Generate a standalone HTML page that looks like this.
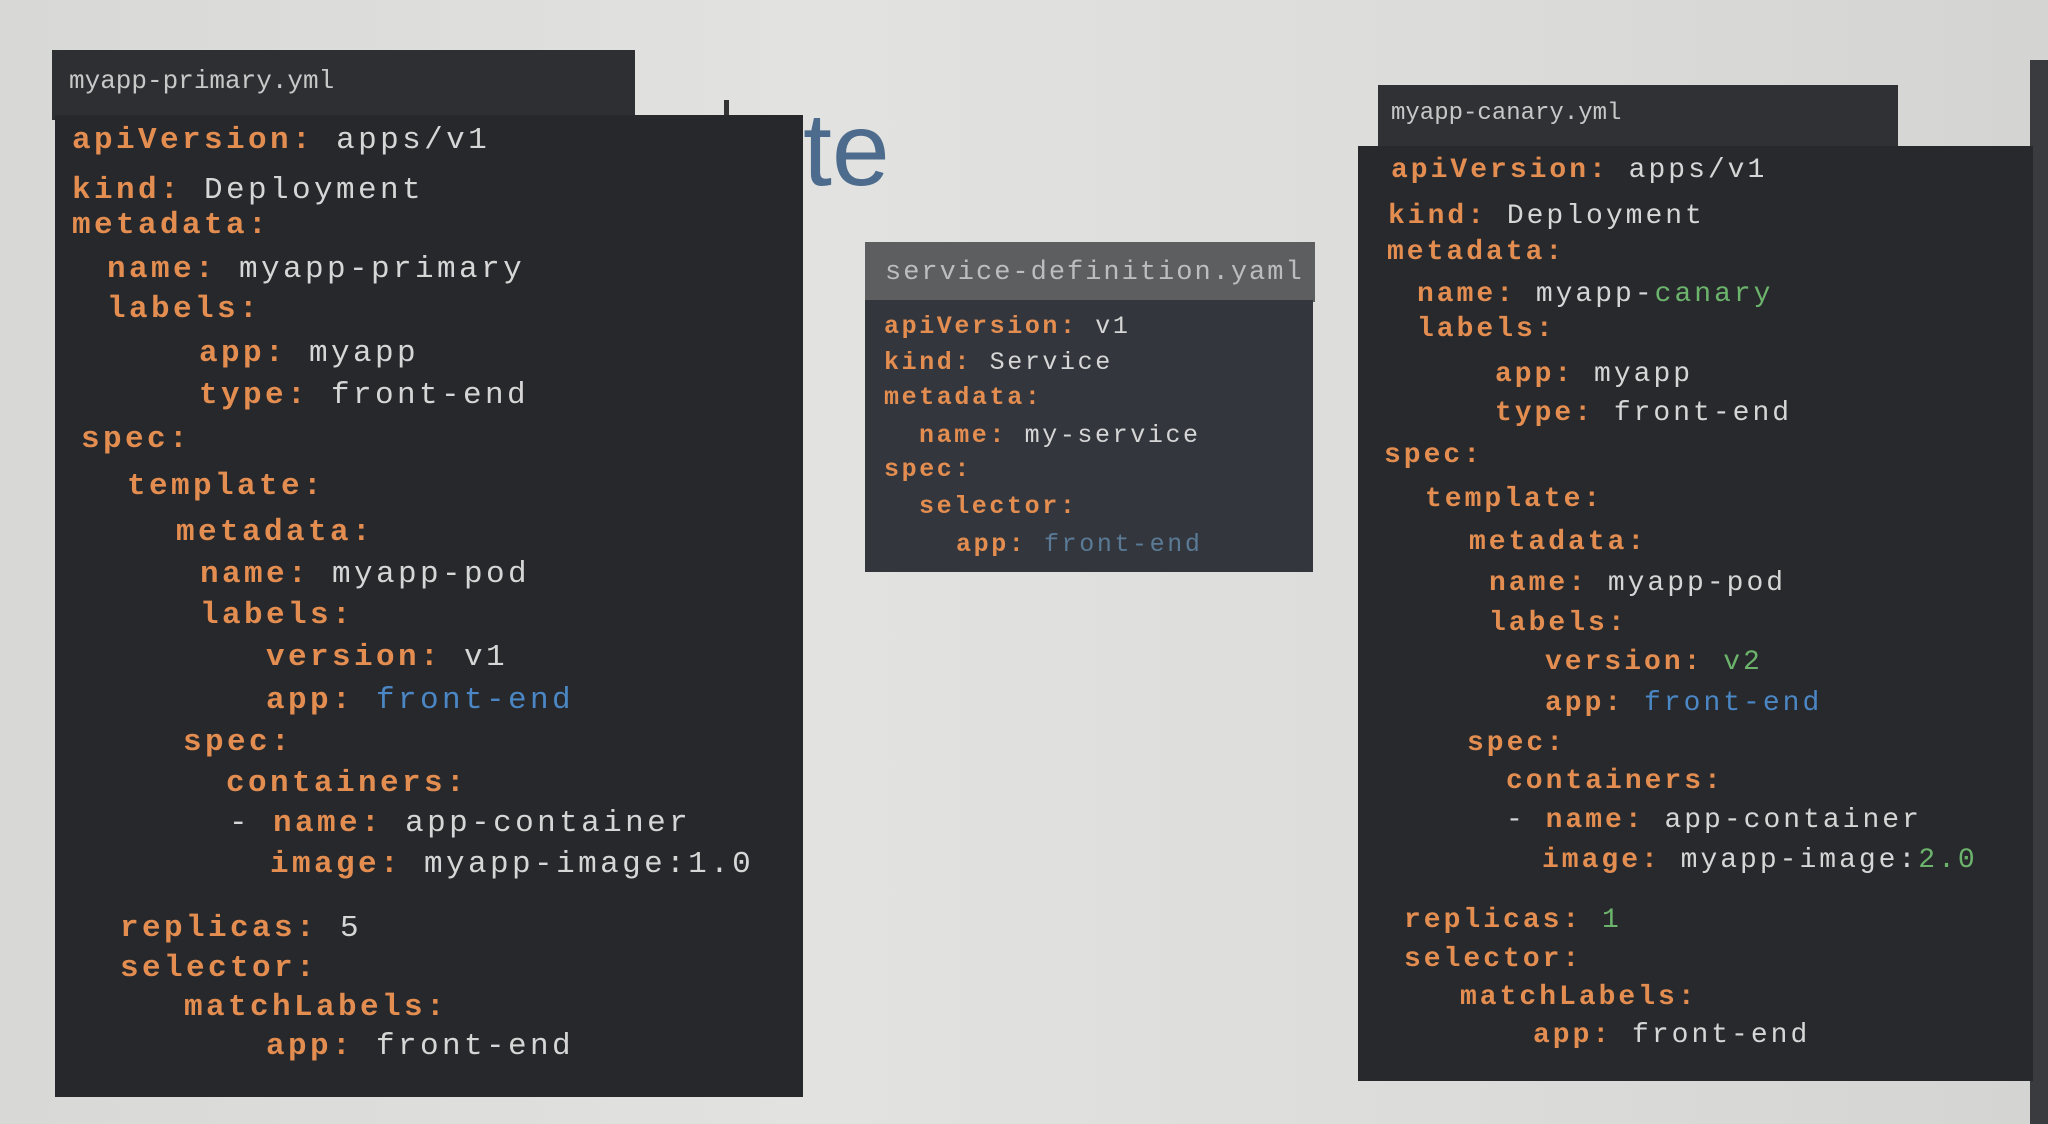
<!DOCTYPE html>
<html><head><meta charset="utf-8"><style>
html,body{margin:0;padding:0}
body{width:2048px;height:1124px;position:relative;overflow:hidden;background:linear-gradient(90deg,#d8d8d6,#e2e2e0 40%,#dcdcda 70%,#d4d4d2);font-family:"Liberation Mono",monospace}
.p{position:absolute}
.l{position:absolute;white-space:pre;line-height:36px;font-weight:bold}
.k{color:#e38d50}
.v{color:#d6d6d6;font-weight:normal}
.b{color:#4b87c4;font-weight:normal}
.g{color:#6cb46c;font-weight:normal}
.L .l{font-size:31px;letter-spacing:3.4px}
.R .l{font-size:28px;letter-spacing:3px}
.M .l{font-size:25px;letter-spacing:2.6px;line-height:32px}
</style></head><body>
<div class="p" style="left:803px;top:95px;font-family:'Liberation Sans',sans-serif;font-size:104px;color:#4d6b8c;line-height:110px">te</div>
<div class="p" style="left:724px;top:100px;width:5px;height:20px;background:#333"></div>
<div class="p" style="left:2030px;top:60px;width:18px;height:1064px;background:#3a3b3f"></div>

<!-- left -->
<div class="p" style="left:52px;top:50px;width:583px;height:70px;background:#2e2f33"></div>
<div class="p" style="left:55px;top:115px;width:748px;height:982px;background:#27282c"></div>
<div class="p" style="left:69px;top:64px;font-size:26px;color:#c8c8c8;line-height:34px;white-space:pre">myapp-primary.yml</div>
<div class="L">
<div class="l" style="left:72px;top:123px"><span class="k">apiVersion:</span> <span class="v">apps/v1</span></div>
<div class="l" style="left:72px;top:173px"><span class="k">kind:</span> <span class="v">Deployment</span></div>
<div class="l" style="left:72px;top:208px"><span class="k">metadata:</span></div>
<div class="l" style="left:107px;top:252px"><span class="k">name:</span> <span class="v">myapp-primary</span></div>
<div class="l" style="left:107px;top:292px"><span class="k">labels:</span></div>
<div class="l" style="left:199px;top:336px"><span class="k">app:</span> <span class="v">myapp</span></div>
<div class="l" style="left:199px;top:378px"><span class="k">type:</span> <span class="v">front-end</span></div>
<div class="l" style="left:81px;top:422px"><span class="k">spec:</span></div>
<div class="l" style="left:127px;top:469px"><span class="k">template:</span></div>
<div class="l" style="left:176px;top:515px"><span class="k">metadata:</span></div>
<div class="l" style="left:200px;top:557px"><span class="k">name:</span> <span class="v">myapp-pod</span></div>
<div class="l" style="left:200px;top:598px"><span class="k">labels:</span></div>
<div class="l" style="left:266px;top:640px"><span class="k">version:</span> <span class="v">v1</span></div>
<div class="l" style="left:266px;top:683px"><span class="k">app:</span> <span class="b">front-end</span></div>
<div class="l" style="left:183px;top:725px"><span class="k">spec:</span></div>
<div class="l" style="left:226px;top:766px"><span class="k">containers:</span></div>
<div class="l" style="left:229px;top:806px"><span class="v">-</span> <span class="k">name:</span> <span class="v">app-container</span></div>
<div class="l" style="left:270px;top:847px"><span class="k">image:</span> <span class="v">myapp-image:1.0</span></div>
<div class="l" style="left:120px;top:911px"><span class="k">replicas:</span> <span class="v">5</span></div>
<div class="l" style="left:120px;top:951px"><span class="k">selector:</span></div>
<div class="l" style="left:184px;top:990px"><span class="k">matchLabels:</span></div>
<div class="l" style="left:266px;top:1029px"><span class="k">app:</span> <span class="v">front-end</span></div>
</div>

<!-- middle -->
<div class="p" style="left:865px;top:242px;width:450px;height:60px;background:#5c5e5f"></div>
<div class="p" style="left:865px;top:300px;width:448px;height:272px;background:#33363c"></div>
<div class="p" style="left:885px;top:256px;font-size:27px;color:#bdbdbd;letter-spacing:2px;line-height:34px;white-space:pre">service-definition.yaml</div>
<div class="M">
<div class="l" style="left:884px;top:311px"><span class="k">apiVersion:</span> <span class="v">v1</span></div>
<div class="l" style="left:884px;top:347px"><span class="k">kind:</span> <span class="v">Service</span></div>
<div class="l" style="left:884px;top:382px"><span class="k">metadata:</span></div>
<div class="l" style="left:919px;top:420px"><span class="k">name:</span> <span class="v">my-service</span></div>
<div class="l" style="left:884px;top:454px"><span class="k">spec:</span></div>
<div class="l" style="left:919px;top:491px"><span class="k">selector:</span></div>
<div class="l" style="left:956px;top:529px"><span class="k">app:</span> <span class="b" style="color:#5a7a96">front-end</span></div>
</div>

<!-- right -->
<div class="p" style="left:1378px;top:85px;width:520px;height:64px;background:#2f3135"></div>
<div class="p" style="left:1358px;top:146px;width:675px;height:935px;background:#27292d"></div>
<div class="p" style="left:1391px;top:98px;font-size:24px;color:#c8c8c8;line-height:32px;white-space:pre">myapp-canary.yml</div>
<div class="R">
<div class="l" style="left:1391px;top:153px"><span class="k">apiVersion:</span> <span class="v">apps/v1</span></div>
<div class="l" style="left:1388px;top:199px"><span class="k">kind:</span> <span class="v">Deployment</span></div>
<div class="l" style="left:1387px;top:235px"><span class="k">metadata:</span></div>
<div class="l" style="left:1417px;top:277px"><span class="k">name:</span> <span class="v">myapp-</span><span class="g">canary</span></div>
<div class="l" style="left:1417px;top:312px"><span class="k">labels:</span></div>
<div class="l" style="left:1495px;top:357px"><span class="k">app:</span> <span class="v">myapp</span></div>
<div class="l" style="left:1495px;top:396px"><span class="k">type:</span> <span class="v">front-end</span></div>
<div class="l" style="left:1384px;top:438px"><span class="k">spec:</span></div>
<div class="l" style="left:1425px;top:482px"><span class="k">template:</span></div>
<div class="l" style="left:1469px;top:525px"><span class="k">metadata:</span></div>
<div class="l" style="left:1489px;top:566px"><span class="k">name:</span> <span class="v">myapp-pod</span></div>
<div class="l" style="left:1489px;top:606px"><span class="k">labels:</span></div>
<div class="l" style="left:1545px;top:645px"><span class="k">version:</span> <span class="g">v2</span></div>
<div class="l" style="left:1545px;top:686px"><span class="k">app:</span> <span class="b">front-end</span></div>
<div class="l" style="left:1467px;top:726px"><span class="k">spec:</span></div>
<div class="l" style="left:1506px;top:764px"><span class="k">containers:</span></div>
<div class="l" style="left:1506px;top:803px"><span class="v">-</span> <span class="k">name:</span> <span class="v">app-container</span></div>
<div class="l" style="left:1542px;top:843px"><span class="k">image:</span> <span class="v">myapp-image:</span><span class="g">2.0</span></div>
<div class="l" style="left:1404px;top:903px"><span class="k">replicas:</span> <span class="g">1</span></div>
<div class="l" style="left:1404px;top:942px"><span class="k">selector:</span></div>
<div class="l" style="left:1460px;top:980px"><span class="k">matchLabels:</span></div>
<div class="l" style="left:1533px;top:1018px"><span class="k">app:</span> <span class="v">front-end</span></div>
</div>
</body></html>
